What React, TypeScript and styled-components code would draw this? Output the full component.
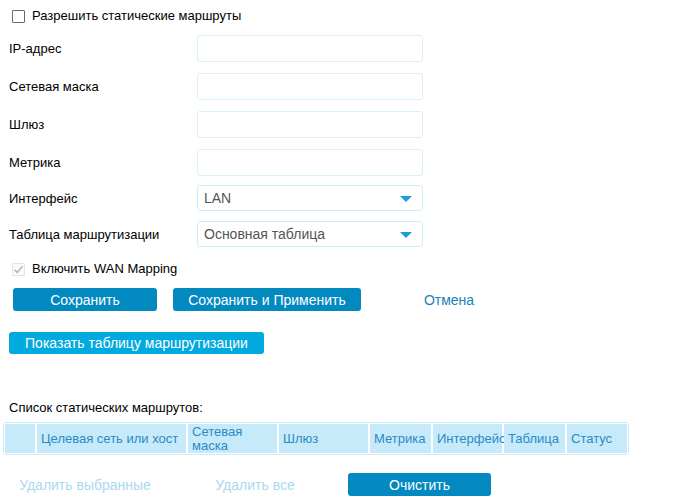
import React from "react";
import styled, { createGlobalStyle } from "styled-components";

const Global = createGlobalStyle`
  html, body { margin: 0; padding: 0; background: #fff; }
  body { font-family: "Liberation Sans", Arial, sans-serif; font-size: 13px; color: #000; }
  * { box-sizing: border-box; }
`;

const Page = styled.div`
  width: 680px;
  height: 501px;
  display: flex;
  flex-direction: column;
  overflow: hidden;
`;

const CheckRow = styled.label<{ $top: number }>`
  display: flex;
  align-items: center;
  gap: 7px;
  margin-top: ${(p) => p.$top}px;
  padding-left: 12px;
  height: 14px;
  font-size: 13px;
  line-height: 14px;
`;

const Box = styled.span<{ $checked?: boolean; $disabled?: boolean }>`
  width: 13px;
  height: 13px;
  flex: none;
  display: inline-flex;
  align-items: center;
  justify-content: center;
  border: 1px solid ${(p) => (p.$disabled ? "#e4e4e4" : "#6b6b6b")};
  background: ${(p) => (p.$disabled ? "#fafafa" : "#fff")};
  border-radius: 1px;
`;

const FieldRow = styled.div<{ $top: number; $h: number }>`
  display: flex;
  align-items: center;
  margin-top: ${(p) => p.$top}px;
  height: ${(p) => p.$h}px;
  padding-left: 9px;
`;

const Label = styled.span`
  width: 188px;
  flex: none;
  font-size: 13px;
`;

const Input = styled.input`
  width: 226px;
  height: 100%;
  border: 1px solid #d9f0fa;
  border-radius: 3px;
  outline: none;
  padding: 0 6px;
  font: inherit;
`;

const Select = styled.div`
  width: 226px;
  height: 100%;
  border: 1px solid #cdebf8;
  border-radius: 3px;
  display: flex;
  align-items: center;
  justify-content: space-between;
  padding: 0 10px 0 6px;
  font-size: 14px;
  color: #555;
`;

const Caret = styled.span`
  width: 0;
  height: 0;
  border-left: 6px solid transparent;
  border-right: 6px solid transparent;
  border-top: 6px solid #1a9edb;
  margin-top: 1px;
`;

const ButtonRow = styled.div<{ $top: number }>`
  display: flex;
  align-items: center;
  margin-top: ${(p) => p.$top}px;
  height: 23px;
`;

const Button = styled.button<{ $w: number; $ml: number; $variant: "primary" | "link" | "disabled" | "light" }>`
  width: ${(p) => p.$w}px;
  margin-left: ${(p) => p.$ml}px;
  height: 23px;
  flex: none;
  border: none;
  border-radius: 3px;
  padding: 0;
  font-family: "Liberation Sans", Arial, sans-serif;
  font-size: 14px;
  white-space: nowrap;
  cursor: pointer;
  background: ${(p) =>
    p.$variant === "primary" ? "#0289bf" : p.$variant === "light" ? "#00a9de" : "transparent"};
  color: ${(p) =>
    p.$variant === "primary" || p.$variant === "light"
      ? "#fff"
      : p.$variant === "link"
      ? "#1b80b7"
      : "#aad9ef"};
`;

const ShowRow = styled.div`
  margin-top: 21px;
  height: 22px;
  display: flex;
`;

const ListTitle = styled.div`
  margin-top: 46px;
  padding-left: 9px;
  height: 15px;
  line-height: 15px;
  font-size: 13px;
`;

const Table = styled.div`
  margin-top: 7px;
  margin-left: 3px;
  width: 626px;
  height: 33px;
  border: 1px solid #c9eaf8;
  border-radius: 3px;
  padding: 1px;
  display: grid;
  grid-template-columns: 30px 149px 89px 89px 61px 69px 61px 60px;
  column-gap: 2px;
`;

const HeadCell = styled.div`
  background: #c6eaf9;
  color: #2a8bc6;
  font-size: 13px;
  line-height: 14px;
  display: flex;
  align-items: center;
  padding-left: 4px;
  white-space: pre-line;
  overflow: visible;
`;

const columns = [
  "",
  "Целевая сеть или хост",
  "Сетевая\nмаска",
  "Шлюз",
  "Метрика",
  "Интерфейс",
  "Таблица",
  "Статус",
];

export default function App() {
  return (
    <Page>
      <Global />
      <CheckRow $top={9}>
        <Box />
        Разрешить статические маршруты
      </CheckRow>
      <FieldRow $top={12} $h={27}>
        <Label>IP-адрес</Label>
        <Input />
      </FieldRow>
      <FieldRow $top={11} $h={27}>
        <Label>Сетевая маска</Label>
        <Input />
      </FieldRow>
      <FieldRow $top={11} $h={27}>
        <Label>Шлюз</Label>
        <Input />
      </FieldRow>
      <FieldRow $top={11} $h={27}>
        <Label>Метрика</Label>
        <Input />
      </FieldRow>
      <FieldRow $top={9} $h={26}>
        <Label>Интерфейс</Label>
        <Select>
          LAN
          <Caret />
        </Select>
      </FieldRow>
      <FieldRow $top={10} $h={26}>
        <Label>Таблица маршрутизации</Label>
        <Select>
          Основная таблица
          <Caret />
        </Select>
      </FieldRow>
      <CheckRow $top={15}>
        <Box $checked $disabled>
          <svg width="11" height="11" viewBox="0 0 11 11">
            <path d="M1.5 5.8 L4.2 8.4 L9.5 2.2" fill="none" stroke="#b5b5b5" strokeWidth="1.6" />
          </svg>
        </Box>
        Включить WAN Mapping
      </CheckRow>
      <ButtonRow $top={12}>
        <Button $w={144} $ml={13} $variant="primary">Сохранить</Button>
        <Button $w={188} $ml={16} $variant="primary">Сохранить и Применить</Button>
        <Button $w={144} $ml={16} $variant="link">Отмена</Button>
      </ButtonRow>
      <ShowRow>
        <Button $w={255} $ml={9} $variant="light" style={{ height: 22 }}>
          Показать таблицу маршрутизации
        </Button>
      </ShowRow>
      <ListTitle>Список статических маршрутов:</ListTitle>
      <Table>
        {columns.map((c, i) => (
          <HeadCell key={i}>{c}</HeadCell>
        ))}
      </Table>
      <ButtonRow $top={18}>
        <Button $w={144} $ml={13} $variant="disabled">Удалить выбранные</Button>
        <Button $w={144} $ml={26} $variant="disabled">Удалить все</Button>
        <Button $w={143} $ml={21} $variant="primary">Очистить</Button>
      </ButtonRow>
    </Page>
  );
}
